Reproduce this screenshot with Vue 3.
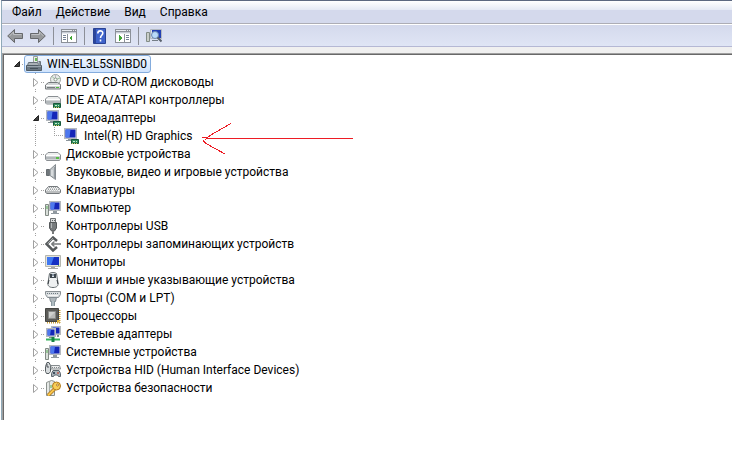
<script setup>
import { ref } from 'vue'

const menu = ['Файл', 'Действие', 'Вид', 'Справка']

const adaptersOpen = ref(true)
const rootOpen = ref(true)

const devices = [
  { icon: 'disc', label: 'DVD и CD-ROM дисководы' },
  { icon: 'ide', label: 'IDE ATA/ATAPI контроллеры' },
  { icon: 'display', label: 'Видеоадаптеры', children: [{ icon: 'display', label: 'Intel(R) HD Graphics' }] },
  { icon: 'disk', label: 'Дисковые устройства' },
  { icon: 'sound', label: 'Звуковые, видео и игровые устройства' },
  { icon: 'keyboard', label: 'Клавиатуры' },
  { icon: 'computer', label: 'Компьютер' },
  { icon: 'usb', label: 'Контроллеры USB' },
  { icon: 'storage', label: 'Контроллеры запоминающих устройств' },
  { icon: 'monitor', label: 'Мониторы' },
  { icon: 'mouse', label: 'Мыши и иные указывающие устройства' },
  { icon: 'port', label: 'Порты (COM и LPT)' },
  { icon: 'cpu', label: 'Процессоры' },
  { icon: 'network', label: 'Сетевые адаптеры' },
  { icon: 'computer', label: 'Системные устройства' },
  { icon: 'hid', label: 'Устройства HID (Human Interface Devices)' },
  { icon: 'security', label: 'Устройства безопасности' }
]

const screen = (x, y, w, h) =>
  `<rect x="${x}" y="${y}" width="${w}" height="${h}" fill="#d9dde0" stroke="#b4b9be"/>` +
  `<rect x="${x + 1}" y="${y + 1}" width="${w - 2}" height="${h - 2}" fill="#1426b8"/>` +
  `<path d="M${x + 1} ${y + 1}h${(w - 2) / 2}l-1 ${h - 2}h-${(w - 4) / 2}z" fill="#4d78ee"/>`

const card =
  '<path d="M8.5 11.5h7v4h-7z" fill="#2f8a5c" stroke="#17583a"/><path d="M10 13h2v1h-2zM13 13h1v1h-1z" fill="#c4eccd"/><path d="M9 15h1v1H9zM11 15h1v1h-1zM13 15h1v1h-1z" fill="#d8cf6a"/>'

const icons = {
  root:
    '<path d="M7.500.5h4v8h-4z" fill="#e8ece8" stroke="#9a9f9a"/><path d="M9 2h2v3H9z" fill="#69b853"/><path d="M2.500 6.500h9l2 3h-12z" fill="#aab1b7" stroke="#68737b"/><path d="M.5 9.500h15v5H.5z" fill="#6b7781" stroke="#505c65"/><path d="M1 10.500h14" stroke="#98a3ac"/><path d="M12.500 5.500h2v4h-2" fill="#8d979e" stroke="#6b757d"/><path d="M4 12h8v1H4z" fill="#46525b"/>',
  disc:
    '<circle cx="10.500" cy="5.500" r="5" fill="#e8ece9" stroke="#9ca19e"/><path d="M10.500 5.500L7 2.500M10.500 5.500L15 4" stroke="#9fc4a2"/><path d="M10.500 1v4" stroke="#b9b9c8"/><circle cx="10.500" cy="5.500" r="1.500" fill="#fff" stroke="#89978a"/><path d="M3.500 8.500h9l3 2v4.500H.5v-4z" fill="#d2d5d6" stroke="#75797c"/><path d="M1 11.500h14" stroke="#fff"/><path d="M2 13.500h8" stroke="#777c7e"/><path d="M11 13h3v1h-3z" fill="#4fbd3a"/>',
  ide:
    '<path d="M3 4.500h10l2.500 2.500v4l-1 1h-13l-1-1V7z" fill="#eeefef" stroke="#8a8f93"/><path d="M1 8.500h14v3H1z" fill="#b2b7ba"/><path d="M1 7.500h14" stroke="#fff"/>' + card,
  display: screen(1.5, 0.5, 12, 10) + '<path d="M5 11h4v1H5zM3 12h6v1H3z" fill="#8d969c"/>' + card,
  disk:
    '<path d="M3 6.500h10l2.500 2.500v4l-1 1.500h-13l-1-1.500V9z" fill="#eeefef" stroke="#8a8f93"/><path d="M1 10.500h14v3H1z" fill="#b2b7ba"/><path d="M1 9.500h14" stroke="#fff"/><path d="M11 11h3v2h-3z" fill="#57bf43"/>',
  sound:
    '<path d="M1.500 5.500h3v6h-3z" fill="#70777b" stroke="#666c70"/><path d="M5 5.500L10.500.5v15L5 11.500z" fill="#c1c6c9" stroke="#858b90"/><path d="M7 6v6" stroke="#eef0f1"/><path d="M9.500 3v11" stroke="#92999f"/>',
  keyboard:
    '<path d="M3.500 4.500h9l3 3.500v2.500l-1.500 1H2l-1.500-1V8z" fill="#f0f1f1" stroke="#74797c"/><path d="M4 5.500h9M3 7.500h11" stroke="#9da1a3" stroke-dasharray="1 1"/><path d="M3 6.500h10M2 8.500h12" stroke="#c3c6c7" stroke-dasharray="1 1"/><path d="M1 10h14" stroke="#85898b"/>',
  computer:
    '<path d="M.5 4.500h3v11h-3z" fill="#d9dfda" stroke="#828a85"/><path d="M2 6v3" stroke="#58ae54"/>' +
    screen(4.5, 1.5, 11, 9) +
    '<path d="M8 11h4v2H8zM6 13h8v1H6z" fill="#9099a0"/>',
  usb:
    '<path d="M5.500 .5h5v4h-5z" fill="#d8dadb" stroke="#6e7274"/><path d="M7 2h1v1H7zM9 2h1v1H9z" fill="#606466"/><path d="M4.500 4.500h7v5.500l-2 3h-3l-2-3z" fill="#777b7d" stroke="#55595b"/><path d="M6.500 5v5" stroke="#b2b6b8"/><path d="M8 13v3" stroke="#77797a" stroke-width="2"/>',
  storage:
    '<path d="M12 5L8 1.500 1.500 8 8 14.500 12 11" fill="none" stroke="#55595b" stroke-width="2.500"/><path d="M6.500 8H16M6.500 8l3-2.500M6.500 8l3 2.500" fill="none" stroke="#75797b" stroke-width="1.500"/><path d="M2.500 7.500L8 2" stroke="#a6aaac"/>',
  monitor:
    '<path d="M.5 1.500h15v11H.5z" fill="#e2e2da" stroke="#b4b6af"/><path d="M2 3h12v8H2z" fill="#1531c3"/><path d="M2 3h7L6 11H2z" fill="#3f78f1"/><path d="M6 13h4v1H6zM3 14h10v1H3z" fill="#a6a9a5"/><path d="M13 11h1v1h-1z" fill="#62bc46"/>',
  mouse:
    '<path d="M4.500 1.500C6 .2 10 .2 11.500 1.500l1.500 9c.6 3-1 5-5 5s-5.600-2-5-5z" fill="#eef0f1" stroke="#656c70"/><path d="M4 8l-1 4M12 8l1 4" stroke="#343a3f"/><path d="M5 2h6v4H5z" fill="#3c454d"/><path d="M7 1h2v4H7z" fill="#dbe4ec"/><path d="M8 2v2" stroke="#35475a"/>',
  port:
    '<path d="M.5 1.500h15v3l-2 3h-11l-2-3z" fill="#d8dcde" stroke="#888f93"/><path d="M2 3.500h12" stroke="#6e7a82" stroke-dasharray="1 1"/><path d="M3 5.500h10" stroke="#f5f5f5"/><path d="M4.500 7.500h7l-1 4h-5z" fill="#aeb6bb" stroke="#818a90"/><path d="M8 11v5" stroke="#8a989f" stroke-width="4"/><path d="M8 11v5" stroke="#d5e0e4"/>',
  cpu:
    '<path d="M2 14.500h13.500M14.500 2v13" fill="none" stroke="#c89b32" stroke-dasharray="1 1" stroke-width="2"/><path d="M.5.5h13v13H.5z" fill="#5b5b58" stroke="#444542"/><path d="M3.500 3.500h7v7h-7z" fill="#b9bab8" stroke="#898b88"/><path d="M4 4h6L4 10z" fill="#d0d1cf"/><path d="M12 12h2v2h-2z" fill="#e0b435"/>',
  network:
    screen(6.5, 0.5, 9, 8) +
    screen(1.5, 2.5, 9, 8) +
    '<path d="M4 11h4v1H4z" fill="#899096"/><path d="M1 13.500h14" stroke="#38b35c" stroke-width="2"/><path d="M8 11v5" stroke="#178344" stroke-width="3"/><path d="M13 9v2" stroke="#858c90" stroke-width="2"/>',
  hid:
    '<path d="M2 .5h2l1.500 3v6l-1.500 2H1.500l-1-2v-5z" fill="#d7dbdd" stroke="#555c60"/><path d="M2 2v3h2" stroke="#4d5359"/><path d="M6 3.500h8.500l1 3.500H6z" fill="#eceded" stroke="#858b8e"/><path d="M7 5.500h8" stroke="#84898c" stroke-dasharray="1 1"/><path d="M8 8.500h6l1.500 3v3h-2l-1-1.500H9.500l-1 1.500h-2v-3z" fill="#a9b2b9" stroke="#5a656e"/><path d="M8 10h2v2H8z" fill="#405060"/><path d="M12 10h2v2h-2z" fill="#b6706b"/>',
  security:
    '<path d="M1.500 2.500l5-2 3 1v14h-8z" fill="#e5e8e6" stroke="#8a908c"/><path d="M4.500 2v13" stroke="#a4aaa6"/><path d="M6 5v3" stroke="#55ae47"/><path d="M10 8.500L3 15.500" stroke="#a8731c" stroke-width="3.500"/><path d="M10 8.500L3 15.500" stroke="#f9c64b" stroke-width="2"/><circle cx="11.500" cy="6" r="4" fill="#f8ce57" stroke="#b07a20"/><circle cx="12.500" cy="5" r="1" fill="#fff" stroke="#b07a20"/>'
}
</script>

<template>
  <div class="window">
    <nav class="menu" aria-label="Меню">
      <button v-for="item in menu" :key="item" type="button">{{ item }}</button>
    </nav>

    <div class="toolbar" role="toolbar">
      <button type="button" aria-label="Назад">
        <svg width="16" height="16" viewBox="0 0 16 16">
          <path d="M.7 8l6.800-6.500v4h8v5h-8v4z" fill="#97999b" stroke="#66686b" />
          <path d="M2.500 8l4-4V6.500h8" fill="none" stroke="#bfc1c4" />
        </svg>
      </button>
      <button type="button" aria-label="Вперёд">
        <svg width="16" height="16" viewBox="0 0 16 16">
          <path d="M15.300 8L8.500 1.500v4h-8v5h8v4z" fill="#97999b" stroke="#66686b" />
          <path d="M1.500 6.500h8V4l4 4" fill="none" stroke="#bfc1c4" />
        </svg>
      </button>
      <span class="divider"></span>
      <button type="button" aria-label="Дерево консоли">
        <svg width="16" height="14" viewBox="0 0 16 14" shape-rendering="crispEdges">
          <path d="M0 0h16v14H0z" fill="#8b9098" />
          <path d="M1 1h10v1H1zM12 1h1v1h-1zM14 1h1v1h-1zM1 4h14v1H1z" fill="#e7eaf0" />
          <path d="M1 3h14v1H1z" fill="#c5cad3" />
          <path d="M1 5h5v8H1zM7 5h8v8H7z" fill="#fff" />
          <path d="M2 6h3v1H2zM2 8h3v1H2zM2 10h3v1H2z" fill="#748196" />
          <path d="M11 6v6L8 9z" fill="#3fa535" />
        </svg>
      </button>
      <span class="divider"></span>
      <button type="button" aria-label="Справка">
        <svg width="16" height="16" viewBox="0 0 16 16">
          <path d="M1.500.500h12v15h-12z" fill="#3f63cb" stroke="#2a4394" />
          <path d="M2 1h2v14H2z" fill="#2c469b" />
          <path d="M5.800 5.500c0-3.700 5-3.200 5-.5 0 2.500-2.300 2-2.300 5M8.500 11.500v2" fill="none" stroke="#fff" stroke-width="1.600" />
        </svg>
      </button>
      <button type="button" aria-label="Панель действий">
        <svg width="16" height="14" viewBox="0 0 16 14" shape-rendering="crispEdges">
          <path d="M0 0h16v14H0z" fill="#8b9098" />
          <path d="M1 1h10v1H1zM12 1h1v1h-1zM14 1h1v1h-1zM1 4h14v1H1z" fill="#e7eaf0" />
          <path d="M1 3h14v1H1z" fill="#c5cad3" />
          <path d="M1 5h8v8H1zM10 5h5v8h-5z" fill="#fff" />
          <path d="M11 6h3v1h-3zM11 8h3v1h-3zM11 10h3v1h-3z" fill="#748196" />
          <path d="M4 6v6l3-3z" fill="#3fa535" />
        </svg>
      </button>
      <span class="divider"></span>
      <button type="button" aria-label="Обновить конфигурацию оборудования">
        <svg width="16" height="16" viewBox="0 0 16 16">
          <path d="M.5 4.500h3v9h-3z" fill="#c9cec9" stroke="#838c86" />
          <path d="M4.500 1.500h11v9h-11z" fill="#e2e5ea" stroke="#b3b9c1" />
          <path d="M6 2h9v8H6z" fill="#2340b4" />
          <path d="M6 12h6v1H6z" fill="#757e87" />
          <circle cx="9" cy="7" r="3.500" fill="#b9dafa" stroke="#6d88b0" />
          <path d="M11.500 9.500l4 4" stroke="#59616d" stroke-width="2" />
        </svg>
      </button>
    </div>

    <main class="frame">
      <div class="row">
        <button class="toggle" type="button" aria-label="Свернуть" @click="rootOpen = !rootOpen">
          <svg width="6" height="6" viewBox="0 0 6 6"><path d="M5.500.500v5h-5z" fill="#404040" stroke="#222" /></svg>
        </button>
        <span class="dots"></span>
        <button class="node selected" type="button">
          <svg width="16" height="16" viewBox="0 0 16 16" fill="none" v-html="icons.root"></svg>WIN-EL3L5SNIBD0
        </button>
      </div>

      <ul v-if="rootOpen" class="branch">
        <li v-for="device in devices" :key="device.label">
          <div class="row">
            <button
              v-if="device.children"
              class="toggle"
              type="button"
              aria-label="Свернуть"
              @click="adaptersOpen = !adaptersOpen"
            >
              <svg width="6" height="6" viewBox="0 0 6 6"><path d="M5.500.500v5h-5z" fill="#404040" stroke="#222" /></svg>
            </button>
            <button v-else class="toggle" type="button" aria-label="Развернуть">
              <svg width="6" height="9" viewBox="0 0 6 9"><path d="M.5.500l4.500 4-4.500 4z" fill="#fff" stroke="#a0a0a0" /></svg>
            </button>
            <span class="dots"></span>
            <button class="node" type="button">
              <svg width="16" height="16" viewBox="0 0 16 16" fill="none" v-html="icons[device.icon]"></svg>{{ device.label }}
            </button>
          </div>
          <ul v-if="device.children && adaptersOpen" class="branch leaf">
            <li v-for="child in device.children" :key="child.label">
              <div class="row">
                <span class="elbow"></span>
                <button class="node" type="button">
                  <svg width="16" height="16" viewBox="0 0 16 16" fill="none" v-html="icons[child.icon]"></svg>{{ child.label }}
                </button>
              </div>
            </li>
          </ul>
        </li>
      </ul>

      <svg class="pointer" width="152" height="34" viewBox="0 0 152 34" fill="none" stroke="#ed1c24" shape-rendering="crispEdges">
        <path d="M0 15.500h6M5 16.500h146M3 18L8 13.500 29 1.500M1 18.500L4 21.500 23 32" />
      </svg>
    </main>
  </div>
</template>

<style>
body {
  margin: 0;
  background: #fff;
}
</style>

<style scoped>
.window {
  margin-left: 1px;
  border-top: 1px solid #5c6880;
  border-left: 1px solid #8fa9b8;
  background: #f0f0f0;
  color: #000;
  font: 12px/18px Roboto, "Open Sans", sans-serif;
}

button {
  margin: 0;
  padding: 0;
  border: 0;
  background: none;
  color: inherit;
  font: inherit;
}

svg {
  display: block;
  flex: none;
}

.menu {
  display: flex;
  gap: 14px;
  height: 22px;
  padding-left: 10px;
  border-bottom: 1px solid #adadb5;
  background: linear-gradient(#fff, #e4e9f4 9px, #d4d9ec 9px, #d4d9ec);
}

.toolbar {
  display: flex;
  align-items: center;
  gap: 7px;
  height: 21px;
  padding-left: 5px;
  border-top: 1px solid #fff;
  border-bottom: 1px solid #b5b8d4;
  background: linear-gradient(#d4d9ec, #dfe5f5);
}

.divider {
  width: 1px;
  height: 18px;
  background: #8c8f98;
}

.frame {
  position: relative;
  margin-top: 6px;
  padding: 1px 0 23px 8px;
  border-top: 1px solid #a0a0a0;
  border-left: 1px solid #a0a0a0;
  background: #fff;
  box-shadow: inset 1px 1px #696969;
}

.branch {
  margin: 0 0 0 19px;
  padding: 0;
  list-style: none;
  background: repeating-linear-gradient(#a0a0a0 0 1px, transparent 1px 2px) 5px 0 / 1px calc(100% - 9px) no-repeat;
}

.leaf {
  background: none;
}

.row {
  display: flex;
  align-items: center;
  height: 18px;
}

.toggle {
  display: flex;
  align-items: center;
  justify-content: center;
  width: 11px;
  height: 14px;
  background: #fff;
}

.dots,
.elbow {
  width: 4px;
  height: 1px;
  background: repeating-linear-gradient(90deg, #a0a0a0 0 1px, transparent 1px 2px);
}

.dots {
  margin-right: -2px;
}

.elbow {
  width: 9px;
  height: 9px;
  margin: 0 -2px 0 5px;
  align-self: flex-start;
  background:
    repeating-linear-gradient(#a0a0a0 0 1px, transparent 1px 2px) 0 0 / 1px 100% no-repeat,
    repeating-linear-gradient(90deg, #a0a0a0 0 1px, transparent 1px 2px) 0 100% / 100% 1px no-repeat;
}

.node {
  display: flex;
  align-items: center;
  gap: 5px;
  box-sizing: border-box;
  height: 18px;
  padding: 0 3px 0 1px;
  border: 1px solid transparent;
  border-radius: 3px;
  line-height: 16px;
  white-space: nowrap;
}

.selected {
  border-color: #84acdd;
  background: linear-gradient(#f2f7fe, #cfe3fc);
}

.pointer {
  position: absolute;
  top: 68px;
  left: 199px;
}
</style>
